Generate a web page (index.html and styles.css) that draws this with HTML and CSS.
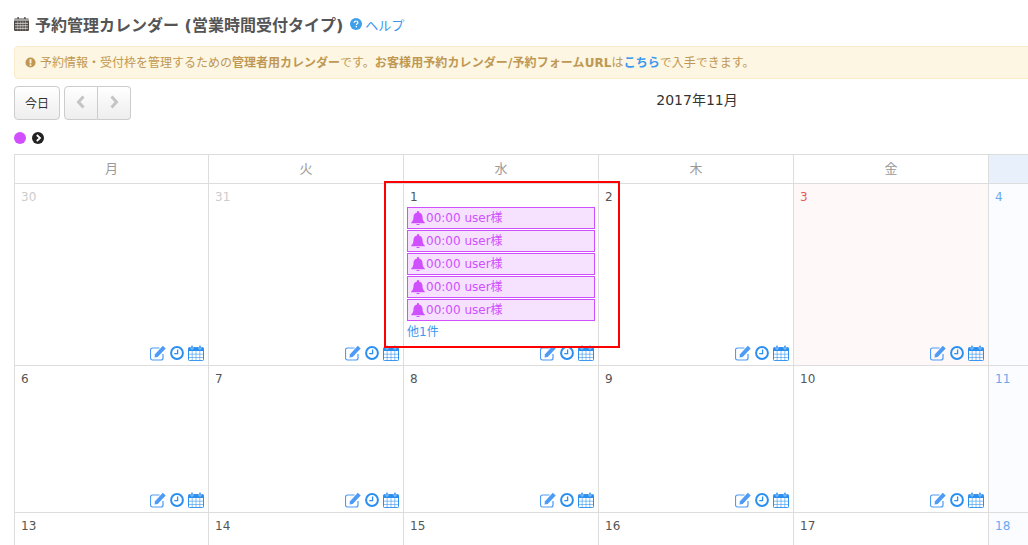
FILE: index.html
```html
<!DOCTYPE html>
<html lang="ja">
<head>
<meta charset="utf-8">
<title>予約管理カレンダー</title>
<link rel="stylesheet" href="styles.css">
</head>
<body>
<svg class="defs" width="0" height="0" aria-hidden="true">
  <symbol id="i-edit" viewBox="0 0 16 16">
    <path d="M13 9v4a2 2 0 0 1-2 2H2.500a2 2 0 0 1-2-2V5a2 2 0 0 1 2-2h7" fill="none" stroke="currentColor" stroke-width="1.200"/>
    <path d="M5 9.300 12.800.8l2.900 2.600L7.700 12 4.500 12.600z" fill="currentColor"/>
  </symbol>
  <symbol id="i-clock" viewBox="0 0 14 14">
    <circle cx="7" cy="7" r="5.900" fill="none" stroke="currentColor" stroke-width="2"/>
    <path d="M7.600 3.400v4.300H4.200" fill="none" stroke="currentColor" stroke-width="1.300"/>
  </symbol>
  <symbol id="i-cal" viewBox="0 0 16 16">
    <path d="M1.500 2.600h13a1 1 0 0 1 1 1v11a1 1 0 0 1-1 1h-13a1 1 0 0 1-1-1v-11a1 1 0 0 1 1-1z" fill="none" stroke="currentColor" stroke-width="1"/>
    <path d="M.5 2.600h15V6H.5z" fill="currentColor"/>
    <path d="M.5 9.200h15M.5 12.500h15M4.200 6v10M8 6v10M11.800 6v10" fill="none" stroke="currentColor" stroke-width=".8" opacity=".7"/>
    <rect x="3" y=".3" width="2" height="4" rx="1" fill="currentColor" stroke="#fff" stroke-width=".5"/>
    <rect x="11" y=".3" width="2" height="4" rx="1" fill="currentColor" stroke="#fff" stroke-width=".5"/>
  </symbol>
  <symbol id="i-bell" viewBox="0 0 14 14">
    <path d="M7 0c.6 0 1 .4 1 1v.5c2.100.4 3.500 2 3.500 4.300 0 3.200.8 4.400 2.300 5.700v.8H.2v-.8c1.500-1.300 2.300-2.500 2.300-5.700C2.500 3.500 3.900 1.900 6 1.500V1c0-.6.400-1 1-1zM5.200 12.900h3.600C8.700 13.600 7.900 14 7 14s-1.700-.4-1.800-1.100z" fill="currentColor"/>
  </symbol>
</svg>

<main class="page">
  <h1 class="title">
    <svg class="title-icon" viewBox="0 0 15 14" aria-hidden="true"><path d="M0 3.400h15v9.400a1.200 1.200 0 0 1-1.200 1.200H1.200A1.200 1.200 0 0 1 0 12.800zM1.200 1.400H3.400V0h1.400v1.400h5.400V0h1.400v1.400h2.200A1.200 1.200 0 0 1 15 2.600H0a1.200 1.200 0 0 1 1.200-1.200z" fill="#4f4a45"/><path d="M1 6.300h13M1 8.800h13M1 11.300h13" stroke="#fff" stroke-width=".7"/><path d="M3.700 4v9.500M6.300 4v9.500M8.900 4v9.500M11.500 4v9.500" stroke="#fff" stroke-width=".35"/></svg>
    <span>予約管理カレンダー (営業時間受付タイプ)</span>
    <a class="help" href="#"><svg class="help-icon" viewBox="0 0 12 12" aria-hidden="true"><circle cx="6" cy="6" r="6" fill="#3f9fe8"/><path d="M4.200 4.700c0-1 .8-1.700 1.900-1.700s1.800.6 1.800 1.500c0 1.300-1.500 1.300-1.500 2.500" fill="none" stroke="#fff" stroke-width="1.200"/><rect x="5.700" y="7.900" width="1.300" height="1.300" fill="#fff"/></svg>ヘルプ</a>
  </h1>

  <p class="notice">
    <svg class="notice-icon" viewBox="0 0 12 12" aria-hidden="true"><circle cx="6" cy="6" r="5.500" fill="#c09853"/><rect x="5" y="2.500" width="2" height="4.500" fill="#fcf6e3"/><rect x="5" y="8" width="2" height="1.700" fill="#fcf6e3"/></svg>
    <span>予約情報・受付枠を管理するための<b>管理者用カレンダー</b>です。<b class="wide">お客様用予約カレンダー/予約フォームURL</b>は<a href="#">こちら</a>で入手できます。</span>
  </p>

  <div class="toolbar">
    <div class="buttons">
      <button class="btn" type="button">今日</button>
      <div class="btn-group">
        <button class="btn nav" type="button"><svg viewBox="0 0 10 14" aria-hidden="true"><path d="M7.500 1.500 2.500 7l5 5.500" fill="none" stroke="#c4c4c4" stroke-width="3"/></svg></button>
        <button class="btn nav" type="button"><svg viewBox="0 0 10 14" aria-hidden="true"><path d="M2.500 1.500 7.500 7l-5 5.500" fill="none" stroke="#c4c4c4" stroke-width="3"/></svg></button>
      </div>
    </div>
    <h2 class="month">2017年11月</h2>
    <div></div>
  </div>

  <div class="legend">
    <span class="dot"></span>
    <svg class="legend-next" viewBox="0 0 12 12" aria-hidden="true"><circle cx="6" cy="6" r="6" fill="#222"/><path d="M4.800 3 8 6 4.800 9" fill="none" stroke="#fff" stroke-width="1.800"/></svg>
  </div>

  <div class="calendar">
    <div class="head">月</div><div class="head">火</div><div class="head">水</div><div class="head">木</div><div class="head">金</div><div class="head sat"></div><div class="head sun"></div>

    <div class="cell r1"><span class="num other">30</span><div class="tools"><svg class="t-edit"><use href="#i-edit"/></svg><svg class="t-clock"><use href="#i-clock"/></svg><svg class="t-cal"><use href="#i-cal"/></svg></div></div>
    <div class="cell r1"><span class="num other">31</span><div class="tools"><svg class="t-edit"><use href="#i-edit"/></svg><svg class="t-clock"><use href="#i-clock"/></svg><svg class="t-cal"><use href="#i-cal"/></svg></div></div>
    <div class="cell r1"><span class="num">1</span>
      <a class="event" href="#"><svg><use href="#i-bell"/></svg>00:00 user様</a>
      <a class="event" href="#"><svg><use href="#i-bell"/></svg>00:00 user様</a>
      <a class="event" href="#"><svg><use href="#i-bell"/></svg>00:00 user様</a>
      <a class="event" href="#"><svg><use href="#i-bell"/></svg>00:00 user様</a>
      <a class="event" href="#"><svg><use href="#i-bell"/></svg>00:00 user様</a>
      <a class="more" href="#">他1件</a>
      <div class="tools"><svg class="t-edit"><use href="#i-edit"/></svg><svg class="t-clock"><use href="#i-clock"/></svg><svg class="t-cal"><use href="#i-cal"/></svg></div></div>
    <div class="cell r1"><span class="num">2</span><div class="tools"><svg class="t-edit"><use href="#i-edit"/></svg><svg class="t-clock"><use href="#i-clock"/></svg><svg class="t-cal"><use href="#i-cal"/></svg></div></div>
    <div class="cell r1 holiday"><span class="num red">3</span><div class="tools"><svg class="t-edit"><use href="#i-edit"/></svg><svg class="t-clock"><use href="#i-clock"/></svg><svg class="t-cal"><use href="#i-cal"/></svg></div></div>
    <div class="cell r1 sat-cell"><span class="num blue">4</span></div>
    <div class="cell r1"></div>

    <div class="cell r2"><span class="num">6</span><div class="tools"><svg class="t-edit"><use href="#i-edit"/></svg><svg class="t-clock"><use href="#i-clock"/></svg><svg class="t-cal"><use href="#i-cal"/></svg></div></div>
    <div class="cell r2"><span class="num">7</span><div class="tools"><svg class="t-edit"><use href="#i-edit"/></svg><svg class="t-clock"><use href="#i-clock"/></svg><svg class="t-cal"><use href="#i-cal"/></svg></div></div>
    <div class="cell r2"><span class="num">8</span><div class="tools"><svg class="t-edit"><use href="#i-edit"/></svg><svg class="t-clock"><use href="#i-clock"/></svg><svg class="t-cal"><use href="#i-cal"/></svg></div></div>
    <div class="cell r2"><span class="num">9</span><div class="tools"><svg class="t-edit"><use href="#i-edit"/></svg><svg class="t-clock"><use href="#i-clock"/></svg><svg class="t-cal"><use href="#i-cal"/></svg></div></div>
    <div class="cell r2"><span class="num">10</span><div class="tools"><svg class="t-edit"><use href="#i-edit"/></svg><svg class="t-clock"><use href="#i-clock"/></svg><svg class="t-cal"><use href="#i-cal"/></svg></div></div>
    <div class="cell r2 sat-cell"><span class="num blue">11</span></div>
    <div class="cell r2"></div>

    <div class="cell r3"><span class="num">13</span></div>
    <div class="cell r3"><span class="num">14</span></div>
    <div class="cell r3"><span class="num">15</span></div>
    <div class="cell r3"><span class="num">16</span></div>
    <div class="cell r3"><span class="num">17</span></div>
    <div class="cell r3 sat-cell"><span class="num blue">18</span></div>
    <div class="cell r3"></div>
  </div>

  <div class="highlight"></div>
</main>
</body>
</html>
```
FILE: styles.css
```css
html, body {
  margin: 0;
  height: 100%;
  overflow: hidden;
  background: #fff;
}
body {
  font-family: "DejaVu Sans", "Noto Sans CJK JP", sans-serif;
  font-size: 12px;
  color: #555;
}
.defs { position: absolute; }
a { color: #3b97f0; text-decoration: none; }

.page {
  position: relative;
  width: 1364px;
  margin-left: 14px;
  padding-top: 13px;
}

.title {
  display: flex;
  align-items: center;
  height: 22px;
  margin: 0 0 11px;
  font-size: 16px;
  font-weight: 700;
  color: #555;
}
.title-icon { width: 15px; height: 14px; margin-right: 6px; }
.help {
  display: flex;
  align-items: center;
  margin-left: 7px;
  font-size: 13px;
  font-weight: 400;
}
.help-icon { width: 12px; height: 12px; margin-right: 3px; }

.notice {
  display: flex;
  align-items: center;
  box-sizing: border-box;
  height: 33px;
  margin: 0 0 7px;
  padding: 0 0 2px 10px;
  background: #fcf6e3;
  border: 1px solid #faebcc;
  border-radius: 4px;
  color: #c09853;
}
.notice-icon { width: 11px; height: 11px; margin: 2px 4px 0 0; }
.notice b { font-weight: 700; }
.notice a { font-weight: 700; }
.notice .wide { letter-spacing: .1px; }

.toolbar {
  display: grid;
  grid-template-columns: 1fr auto 1fr;
  height: 34px;
  margin-bottom: 12px;
}
.buttons { display: flex; gap: 4px; }
.btn {
  box-sizing: border-box;
  height: 34px;
  width: 46px;
  padding: 0 0 2px;
  background: linear-gradient(#fff, #eee);
  border: 1px solid #ccc;
  border-radius: 4px;
  font: 12px "Noto Sans CJK JP", sans-serif;
  color: #333;
}
.btn-group { display: flex; }
.btn.nav {
  display: flex;
  align-items: center;
  justify-content: center;
  width: 34px;
  padding: 0 0 2px;
  border-radius: 4px 0 0 4px;
}
.btn.nav + .btn.nav {
  width: 33px;
  border-left: 0;
  border-radius: 0 4px 4px 0;
}
.btn.nav svg { width: 10px; height: 14px; }
.month {
  margin: 4px 0 0 2px;
  font-size: 14px;
  font-weight: 400;
  line-height: 20px;
  color: #333;
}

.legend {
  display: flex;
  align-items: center;
  gap: 6px;
  height: 12px;
  margin-bottom: 10px;
}
.dot {
  width: 12px;
  height: 12px;
  border-radius: 50%;
  background: #d04fff;
}
.legend-next { width: 12px; height: 12px; }

.calendar {
  display: grid;
  grid-template-columns: 194px repeat(6, 195px);
  grid-template-rows: 29px 182px 147px 60px;
  border-top: 1px solid #ddd;
  box-sizing: border-box;
}
.head {
  display: flex;
  align-items: center;
  justify-content: center;
  padding-bottom: 3px;
  border-left: 1px solid #ddd;
  border-bottom: 1px solid #ddd;
  color: #999;
  font-size: 13px;
}
.head.sat { background: #e8f0fc; }
.cell {
  display: flex;
  flex-direction: column;
  box-sizing: border-box;
  min-width: 0;
  padding: 6px 3px 3px;
  border-left: 1px solid #ddd;
  border-bottom: 1px solid #ddd;
  position: relative;
}
.holiday { background: #fef9f8; }
.sat-cell { background: #fbfcff; }
.num {
  height: 17px;
  margin: 0 0 0 3px;
  line-height: 15px;
  font-size: 12px;
  color: #555;
}
.num.other { color: #ccc; }
.num.red { color: #e8595a; }
.num.blue { color: #6aa9f0; }

.event {
  display: flex;
  align-items: center;
  box-sizing: border-box;
  height: 22px;
  margin-bottom: 1px;
  padding-left: 3px;
  background: #f6e2ff;
  border: 1px solid #d04fff;
  color: #d04fff;
  line-height: 20px;
}
.event svg { width: 14px; height: 14px; margin-right: 1px; }
.more { margin-top: 2px; line-height: 17px; }

.tools {
  display: flex;
  justify-content: flex-end;
  align-items: center;
  gap: 4px;
  margin-top: auto;
  padding: 0 1px 1px 0;
  color: #2b8ff0;
}
.t-edit { width: 16px; height: 16px; color: #4d9bf5; }
.t-clock { width: 14px; height: 14px; }
.t-cal { width: 16px; height: 16px; }

.highlight {
  position: absolute;
  left: 370px;
  top: 181px;
  width: 236px;
  height: 167px;
  box-sizing: border-box;
  border: 2.500px solid #f00;
}
```
